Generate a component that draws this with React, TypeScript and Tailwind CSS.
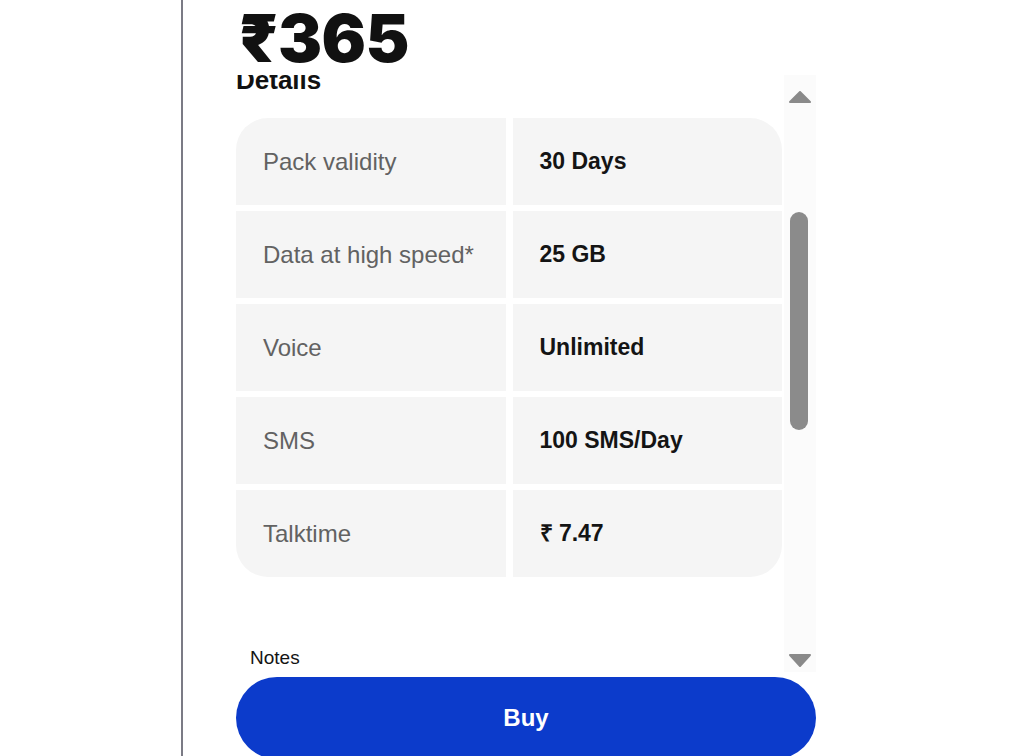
import React from 'react';

const rows = [
  { label: 'Pack validity', value: '30 Days' },
  { label: 'Data at high speed*', value: '25 GB' },
  { label: 'Voice', value: 'Unlimited' },
  { label: 'SMS', value: '100 SMS/Day' },
  { label: 'Talktime', value: '₹ 7.47' },
];

const sans = { fontFamily: '"Liberation Sans", Arial, sans-serif' };

function ScrollTrack() {
  return (
    <div className="w-[32px] ml-[2px] bg-[#fbfbfb] flex flex-col items-center pt-[16px] pb-[5px]">
      {/* up arrow */}
      <svg width="22" height="12" viewBox="0 0 22 12">
        <path d="M11 1 L21 11 L1 11 Z" fill="#8a8a8a" stroke="#8a8a8a" strokeLinejoin="round" strokeWidth="2" />
      </svg>
      {/* thumb */}
      <div className="mt-[109px] w-[18px] h-[218px] rounded-full bg-[#8b8b8b] -ml-[2px]" />
      <div className="flex-1" />
      {/* down arrow */}
      <svg width="22" height="13" viewBox="0 0 22 13">
        <path d="M1 1 L21 1 L11 12 Z" fill="#8a8a8a" stroke="#8a8a8a" strokeLinejoin="round" strokeWidth="2" />
      </svg>
    </div>
  );
}

export default function App() {
  return (
    <div className="w-full h-[756px] bg-white flex overflow-hidden" style={sans}>
      <div className="w-[181px] shrink-0" />
      <div className="w-[2px] shrink-0 bg-[#7b7b85]" />

      <div className="w-[633px] pl-[53px] flex flex-col">
        {/* Price */}
        <div
          className="pt-[5px] pl-[3px] mb-[4px] shrink-0 text-[66px] leading-none font-black text-[#111] tracking-[-0.5px]"
          style={{ fontFamily: 'Inter, "DejaVu Sans", sans-serif' }}
        >
          ₹365
        </div>

        {/* Scroll area */}
        <div className="h-[597px] shrink-0 flex">
          <div className="w-[546px] overflow-hidden">
            <h2 className="-mt-[8px] text-[26px] leading-none font-bold text-[#111]">Details</h2>

            <div className="mt-[25px] rounded-[32px] overflow-hidden grid grid-cols-2 gap-x-[7px] gap-y-[6px]">
              {rows.map((r) => (
                <React.Fragment key={r.label}>
                  <div className="h-[87px] bg-[#f5f5f5] flex items-center pl-[27px] text-[24px] text-[#626262]">
                    {r.label}
                  </div>
                  <div className="h-[87px] bg-[#f5f5f5] flex items-center pl-[27px] text-[23px] font-bold text-[#141414]">
                    {r.value}
                  </div>
                </React.Fragment>
              ))}
            </div>

            <p className="mt-[71px] pl-[14px] text-[19px] leading-none text-[#141414]">Notes</p>
          </div>

          <ScrollTrack />
        </div>

        {/* Buy */}
        <button className="mt-[5px] w-[580px] h-[82px] shrink-0 rounded-full bg-[#0c3bcb] text-white text-[24px] font-bold flex items-center justify-center">
          Buy
        </button>
      </div>
    </div>
  );
}
